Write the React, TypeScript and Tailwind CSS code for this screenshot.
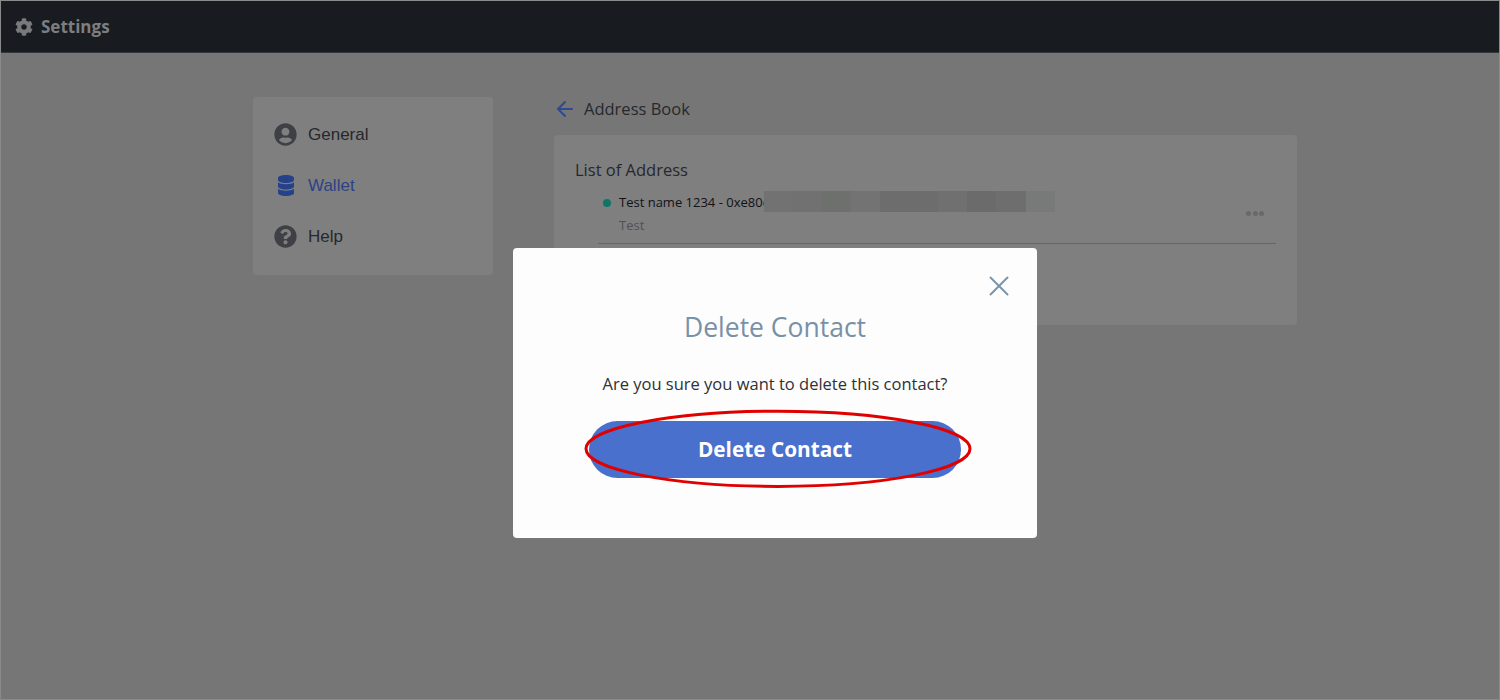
import React from "react";
import { ArrowLeft, X } from "lucide-react";
import { FaCog, FaDatabase, FaQuestionCircle, FaUserCircle } from "react-icons/fa";

const blurBlocks = [
  { w: "w-[29px]", c: "bg-[#727272]" },
  { w: "w-[29px]", c: "bg-[#717171]" },
  { w: "w-[29px]", c: "bg-[#6e706e]" },
  { w: "w-[29px]", c: "bg-[#737373]" },
  { w: "w-[29px]", c: "bg-[#6d6d6d]" },
  { w: "w-[29px]", c: "bg-[#6d6d6d]" },
  { w: "w-[29px]", c: "bg-[#707070]" },
  { w: "w-[29px]", c: "bg-[#6b6b6b]" },
  { w: "w-[30px]", c: "bg-[#6e6e6e]" },
  { w: "w-[29px]", c: "bg-[#787a79]" },
];

const NavItem: React.FC<{
  icon: React.ReactNode;
  label: string;
  active?: boolean;
}> = ({ icon, label, active }) => {
  return (
    <div className="flex items-center h-[51px]">
      <div className={"w-[24px] flex justify-center " + (active ? "text-[#24418a]" : "text-[#3f4045]")}>
        {icon}
      </div>
      <div
        className={
          "ml-[11px] text-[17px] font-['Liberation_Sans',sans-serif] " +
          (active ? "text-[#2c4285]" : "text-[#26282c]")
        }
      >
        {label}
      </div>
    </div>
  );
};

export default function App() {
  return (
    <div className="relative w-[1500px] h-[700px] overflow-hidden bg-[#767676] border border-[#8a8a8a] font-['Open_Sans',sans-serif]">
      <div className="flex items-center h-[52px] bg-[#181c21] border-b border-[#34373b] pl-[14px]">
        <FaCog className="text-[#77797b] text-[18px]" />
        <div className="ml-[8px] text-[17px] font-bold text-[#7c7e80]">Settings</div>
      </div>

      <div className="flex pl-[252px] pt-[44px]">
        <div className="w-[240px] h-[178px] bg-[#7f7f7f] rounded-[4px] px-[20px] pt-[12px]">
          <NavItem icon={<FaUserCircle className="text-[23px]" />} label="General" />
          <NavItem
            icon={<FaDatabase className="w-[16px] h-[21px] ml-[1px]" preserveAspectRatio="none" />}
            label="Wallet"
            active
          />
          <NavItem icon={<FaQuestionCircle className="text-[23px]" />} label="Help" />
        </div>

        <div className="ml-[61px] w-[743px]">
          <div className="flex items-center h-[24px]">
            <ArrowLeft className="text-[#2f4a8f] w-[24px] h-[24px] ml-[-1px]" strokeWidth={2} />
            <div className="ml-[7px] text-[16.5px] text-[#26282d]">Address Book</div>
          </div>
          <div className="mt-[14px] h-[190px] bg-[#7f7f7f] rounded-[4px] px-[21px] pt-[23px]">
            <div className="text-[16.5px] leading-[24px] text-[#26282c]">List of Address</div>
            <div className="relative h-[62px] ml-[23px] pt-[9px] border-b border-[#656565]">
              <div className="flex items-center h-[21px] pl-[5px]">
                <div className="w-[8px] h-[8px] rounded-full bg-[#0e7568] mt-[2px]" />
                <div className="ml-[8px] mt-[2px] w-[145px] whitespace-nowrap text-[13px] text-[#111215]">
                  Test name 1234 - 0xe80d
                </div>
                <div className="relative flex h-[21px]">
                  {blurBlocks.map((block, i) => (
                    <div key={i} className={block.w + " h-full " + block.c} />
                  ))}
                </div>
              </div>
              <div className="ml-[21px] mt-[4px] text-[13px] leading-[18px] text-[#505153]">Test</div>
              <div className="absolute right-[12px] top-[29px] flex gap-[1.5px]">
                <div className="w-[5px] h-[5px] rounded-full bg-[#696969]" />
                <div className="w-[5px] h-[5px] rounded-full bg-[#696969]" />
                <div className="w-[5px] h-[5px] rounded-full bg-[#696969]" />
              </div>
            </div>
          </div>
        </div>
      </div>

      <div className="absolute left-[512px] top-[247px] w-[524px] h-[290px] bg-[#fdfdfd] rounded-[4px] flex flex-col items-center">
        <X className="absolute right-[21px] top-[21px] text-[#7c94aa] w-[34px] h-[34px]" strokeWidth={1.4} />
        <div className="mt-[61px] text-[26.5px] leading-[36px] text-[#7890a8]">Delete Contact</div>
        <div className="mt-[28px] text-[16.5px] leading-[22px] text-[#2f3136]">
          Are you sure you want to delete this contact?
        </div>
        <button className="mt-[26px] w-[372px] h-[57px] rounded-[29px] bg-[#4870cc] text-white text-[20.8px] font-bold">
          Delete Contact
        </button>
      </div>

      <svg className="absolute left-[580px] top-[404px]" width="396" height="88" viewBox="0 0 396 88">
        <ellipse cx="197" cy="43.8" rx="192" ry="37.6" fill="none" stroke="#e00000" strokeWidth="3" />
      </svg>
    </div>
  );
}
